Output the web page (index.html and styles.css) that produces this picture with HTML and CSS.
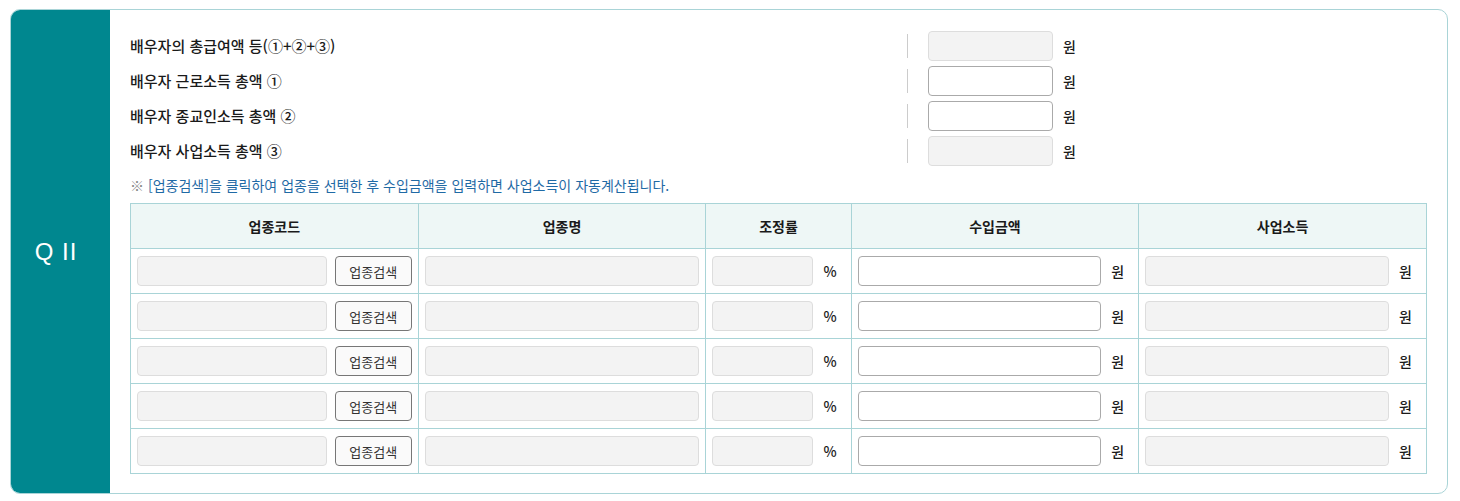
FILE: index.html
```html
<!DOCTYPE html>
<html lang="ko">
<head>
<meta charset="UTF-8">
<title>배우자 소득</title>
<link rel="stylesheet" href="styles.css">
</head>
<body>
  <div class="card">
    <div class="side">Q II</div>
    <div class="content">
      <div class="sum-list">
        <div class="sum-row">
          <div class="sum-label">배우자의 총급여액 등(①+②+③)</div>
          <div class="sum-field"><input class="inp ro" readonly><span class="unit">원</span></div>
        </div>
        <div class="sum-row">
          <div class="sum-label">배우자 근로소득 총액 ①</div>
          <div class="sum-field"><input class="inp"><span class="unit">원</span></div>
        </div>
        <div class="sum-row">
          <div class="sum-label">배우자 종교인소득 총액 ②</div>
          <div class="sum-field"><input class="inp"><span class="unit">원</span></div>
        </div>
        <div class="sum-row">
          <div class="sum-label">배우자 사업소득 총액 ③</div>
          <div class="sum-field"><input class="inp ro" readonly><span class="unit">원</span></div>
        </div>
      </div>

      <p class="note"><span class="mark">※</span> [업종검색]을 클릭하여 업종을 선택한 후 수입금액을 입력하면 사업소득이 자동계산됩니다.</p>

      <table class="biz">
        <colgroup>
          <col class="c2"><col class="c2"><col class="c1"><col class="c2"><col class="c2">
        </colgroup>
        <thead>
          <tr>
            <th>업종코드</th>
            <th>업종명</th>
            <th>조정률</th>
            <th>수입금액</th>
            <th>사업소득</th>
          </tr>
        </thead>
        <tbody id="rows"></tbody>
      </table>
    </div>
  </div>

<script>
  // 업종 입력행 5개 생성
  var rowHtml =
    '<tr>' +
    '<td><div class="cell"><input class="inp ro" readonly><button class="search-btn">업종검색</button></div></td>' +
    '<td><div class="cell"><input class="inp ro" readonly></div></td>' +
    '<td><div class="cell"><input class="inp ro" readonly><span class="unit end">%</span></div></td>' +
    '<td><div class="cell"><input class="inp"><span class="unit end">원</span></div></td>' +
    '<td><div class="cell"><input class="inp ro" readonly><span class="unit end">원</span></div></td>' +
    '</tr>';
  var tbody = document.getElementById('rows');
  for (var i = 0; i < 5; i++) {
    tbody.insertAdjacentHTML('beforeend', rowHtml);
  }
</script>
</body>
</html>
```

FILE: styles.css
```css
:root {
  --teal: #00878f;
  --line: #a9d4d7;
  --head-bg: #eef7f6;
  --text-color: #1a1a1a;
}

body {
  margin: 0;
  padding: 9px 12px 6px 10px;
  font-family: "Noto Sans CJK KR", "Noto Sans", sans-serif;
  font-size: 14px;
  color: var(--text-color);
  background: #fff;
}

.card {
  display: flex;
  border: 1px solid var(--line);
  border-radius: 10px;
  overflow: hidden;
  height: 483px;
}

.side {
  box-sizing: border-box;
  width: 100px;
  flex: none;
  background: var(--teal);
  color: #fff;
  display: flex;
  align-items: center;
  justify-content: center;
  font-family: "Liberation Sans", sans-serif;
  font-size: 24px;
  letter-spacing: 1px;
  margin: -1px 0 -1px -1px;
  padding-right: 8px;
}

.content {
  flex: 1;
  padding: 18px 20px 20px 20px;
}

.sum-row {
  display: flex;
  align-items: center;
  height: 35px;
}

.sum-label {
  width: 777px;
  font-size: 15px;
  font-weight: 500;
}

.sum-field {
  display: flex;
  align-items: center;
  border-left: 1px solid #ccc;
  height: 24px;
  padding-left: 20px;
}

.inp {
  box-sizing: border-box;
  height: 30px;
  border: 1px solid #aaa;
  border-radius: 4px;
  background: #fff;
  font: inherit;
  padding: 0 6px;
  min-width: 0;
}

.inp.ro {
  background: #f3f3f3;
  border-color: #ddd;
}

.sum-field .inp {
  width: 125px;
}

.unit {
  margin-left: 10px;
  font-weight: 500;
}

.unit.end {
  padding-right: 8px;
}

.note {
  margin: 9px 0 0 0;
  height: 26px;
  line-height: 16px;
  color: #1f6aa5;
}

.note .mark {
  color: #888;
}

table.biz {
  width: 100%;
  border-collapse: collapse;
  table-layout: fixed;
}

col.c2 { width: 22.2%; }
col.c1 { width: 11.2%; }

.biz th,
.biz td {
  border: 1px solid var(--line);
  height: 45px;
  padding: 0 6px;
  box-sizing: border-box;
}

.biz th {
  background: var(--head-bg);
  font-weight: 700;
  text-align: center;
}

.cell {
  display: flex;
  align-items: center;
}

.cell .inp {
  flex: 1;
}

.search-btn {
  flex: none;
  margin-left: 8px;
  width: 77px;
  height: 30px;
  box-sizing: border-box;
  border: 1px solid #777;
  border-radius: 4px;
  background: #fafafa;
  color: #333;
  font-family: inherit;
  font-size: 13px;
  cursor: pointer;
}
```
